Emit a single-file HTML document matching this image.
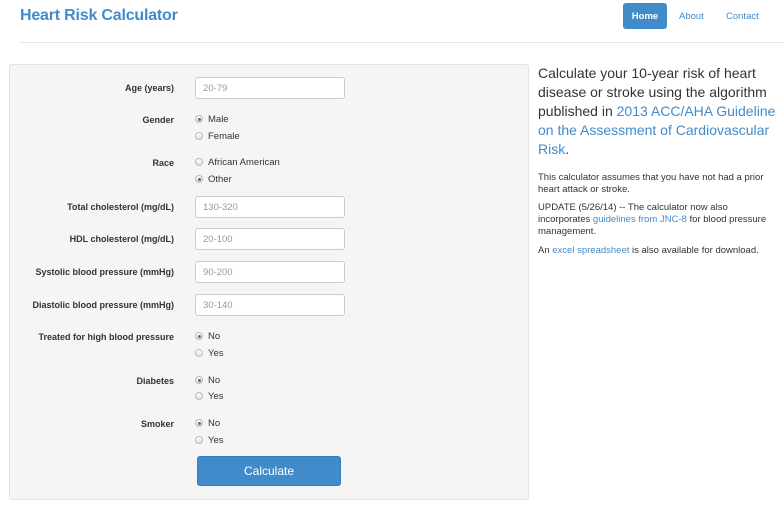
<!DOCTYPE html>
<html><head><style>
*{margin:0;padding:0;box-sizing:border-box}
body{width:784px;height:508px;background:#fff;font-family:"Liberation Sans",Arial,sans-serif;color:#333;position:relative;overflow:hidden}
.a{position:absolute;white-space:nowrap}
.t{left:20px;top:7px;font-size:16px;font-weight:bold;color:#428bca;letter-spacing:-0.2px}
.home{left:623px;top:3px;width:44px;height:26px;background:#428bca;border-radius:3px;color:#fff;font-size:9.5px;font-weight:bold;text-align:center;line-height:27px}
.nav{top:3px;line-height:27px;font-size:9.5px;color:#428bca}
.hr{left:19px;top:42px;width:765px;height:1px;background:#e5e5e5}
.panel{left:9px;top:64px;width:520px;height:436px;background:#f5f5f5;border:1px solid #e3e3e3;border-radius:3px}
.l{right:610px;font-size:9px;font-weight:bold;color:#333;text-align:right}
.in{left:195px;width:150px;height:22px;background:#fff;border:1px solid #ccc;border-radius:3px;font-size:9.5px;color:#999;padding-left:7px;line-height:21px}
.r{left:195px;font-size:9.5px;color:#333}
.r i{display:inline-block;width:8px;height:8px;border-radius:50%;border:1px solid #bbb;background:linear-gradient(#fff,#e0e0e0);vertical-align:-1px;margin-right:5px;position:relative}
.r i.c::after{content:"";position:absolute;left:1.5px;top:1.5px;width:3px;height:3px;border-radius:50%;background:#666}
.btn{left:197px;top:456px;width:144px;height:30px;background:#428bca;border:1px solid #357ebd;border-radius:3px;color:#fff;font-size:12px;text-align:center;line-height:28px}
.big{left:538px;top:64px;width:240px;font-size:14px;line-height:19px;white-space:normal}
.sm{left:538px;width:240px;font-size:9.5px;line-height:12px;white-space:normal}
a{color:#428bca;text-decoration:none}
</style></head><body>
<div class="a t">Heart Risk Calculator</div>
<div class="a home">Home</div>
<div class="a nav" style="left:679px">About</div>
<div class="a nav" style="left:726px">Contact</div>
<div class="a hr"></div>
<div class="a panel"></div>

<div class="a l" style="top:83px">Age (years)</div>
<div class="a in" style="top:77px">20-79</div>
<div class="a l" style="top:115px">Gender</div>
<div class="a r" style="top:114px"><i class="c"></i>Male</div>
<div class="a r" style="top:131px"><i></i>Female</div>
<div class="a l" style="top:158px">Race</div>
<div class="a r" style="top:157px"><i></i>African American</div>
<div class="a r" style="top:174px"><i class="c"></i>Other</div>
<div class="a l" style="top:202px">Total cholesterol (mg/dL)</div>
<div class="a in" style="top:196px">130-320</div>
<div class="a l" style="top:234px">HDL cholesterol (mg/dL)</div>
<div class="a in" style="top:228px">20-100</div>
<div class="a l" style="top:267px">Systolic blood pressure (mmHg)</div>
<div class="a in" style="top:261px">90-200</div>
<div class="a l" style="top:300px">Diastolic blood pressure (mmHg)</div>
<div class="a in" style="top:294px">30-140</div>
<div class="a l" style="top:332px">Treated for high blood pressure</div>
<div class="a r" style="top:331px"><i class="c"></i>No</div>
<div class="a r" style="top:348px"><i></i>Yes</div>
<div class="a l" style="top:376px">Diabetes</div>
<div class="a r" style="top:375px"><i class="c"></i>No</div>
<div class="a r" style="top:391px"><i></i>Yes</div>
<div class="a l" style="top:419px">Smoker</div>
<div class="a r" style="top:418px"><i class="c"></i>No</div>
<div class="a r" style="top:435px"><i></i>Yes</div>
<div class="a btn">Calculate</div>

<div class="a big">Calculate your 10-year risk of heart disease or stroke using the algorithm published in <a>2013 ACC/AHA Guideline on the Assessment of Cardiovascular Risk</a>.</div>
<div class="a sm" style="top:172px">This calculator assumes that you have not had a prior heart attack or stroke.</div>
<div class="a sm" style="top:202px">UPDATE (5/26/14) -- The calculator now also incorporates <a>guidelines from JNC-8</a> for blood pressure management.</div>
<div class="a sm" style="top:245px">An <a>excel spreadsheet</a> is also available for download.</div>
</body></html>
